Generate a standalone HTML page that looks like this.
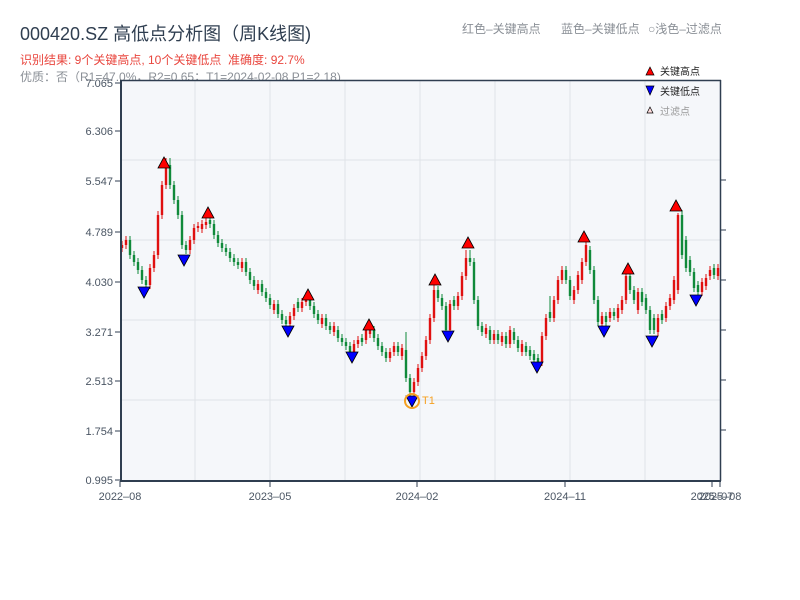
<!DOCTYPE html>
<html><head><meta charset="utf-8"><style>
body{margin:0;width:800px;height:600px;background:#fff;overflow:hidden;font-family:"Liberation Sans","Noto Sans CJK SC",sans-serif;}
</style></head><body>
<svg width="800" height="600" xmlns="http://www.w3.org/2000/svg" style="position:absolute;left:0;top:0;font-family:'Liberation Sans','Noto Sans CJK SC',sans-serif">
<text x="20" y="40" font-size="18" fill="#2f3e50">000420.SZ 高低点分析图（周K线图)</text>
<text x="20" y="64" font-size="12" fill="#e9463e">识别结果: 9个关键高点, 10个关键低点&#160;&#160;准确度: 92.7%</text>
<text x="20" y="81" font-size="12" fill="#8a8f96">优质：否（R1=47.0%，R2=0.65；T1=2024-02-08 P1=2.18)</text>
<text x="462" y="33" font-size="12" fill="#8a8f96">红色–关键高点</text>
<text x="561" y="33" font-size="12" fill="#8a8f96">蓝色–关键低点</text>
<text x="648" y="33" font-size="12" fill="#8a8f96">○浅色–过滤点</text>
<rect x="120" y="80" width="601" height="401" fill="#f5f7fa"/>
<g stroke="#e0e3e8" stroke-width="1">
<line x1="195" y1="80" x2="195" y2="481"/><line x1="270" y1="80" x2="270" y2="481"/><line x1="345" y1="80" x2="345" y2="481"/><line x1="420" y1="80" x2="420" y2="481"/><line x1="495" y1="80" x2="495" y2="481"/><line x1="570" y1="80" x2="570" y2="481"/><line x1="645" y1="80" x2="645" y2="481"/>
<line x1="120" y1="160" x2="721" y2="160"/><line x1="120" y1="240" x2="721" y2="240"/><line x1="120" y1="320" x2="721" y2="320"/><line x1="120" y1="400" x2="721" y2="400"/>
</g>
<path fill="none" stroke="#e01010" stroke-width="1" d="M122 241V252 M126 236V249 M150 264V289 M154 251V272 M158 211V259 M162 181V219 M166 158V189 M190 236V254 M194 224V244 M198 222V232 M202 220V233 M206 218V229 M242 258V272 M258 280V294 M274 300V314 M290 312V328 M294 304V320 M302 298V312 M306 292V306 M322 314V328 M334 322V336 M354 340V356 M358 336V348 M366 326V344 M370 324V338 M390 348V362 M394 342V356 M402 344V360 M414 378V396 M418 364V386 M422 352V372 M426 336V360 M430 314V344 M434 276V322 M450 300V334 M458 292V310 M462 272V300 M466 250V280 M486 324V338 M494 330V344 M502 332V346 M510 326V348 M522 340V356 M542 332V366 M546 314V340 M554 296V322 M558 276V304 M562 266V284 M574 286V304 M578 271V294 M582 258V284 M586 236V266 M602 312V328 M610 308V322 M618 304V322 M622 296V314 M626 272V304 M638 288V314 M658 314V336 M666 302V322 M670 294V310 M674 276V304 M678 213V294 M702 278V296 M706 274V290 M710 266V280 M718 264V280"/>
<path fill="none" stroke="#e01010" stroke-width="2.4" d="M122 248V245 M126 245V240 M150 285V268 M154 268V255 M158 255V215 M162 215V185 M166 185V165 M190 250V240 M194 240V228 M198 228V226 M202 229V224 M206 225V222 M242 268V262 M258 290V284 M274 310V304 M290 324V316 M294 316V308 M302 308V302 M306 302V296 M322 324V318 M334 332V326 M354 352V344 M358 344V340 M366 340V330 M370 334V328 M390 358V352 M394 352V346 M402 356V348 M414 392V382 M418 382V368 M422 368V356 M426 356V340 M430 340V318 M434 318V290 M450 330V304 M458 306V296 M462 296V276 M466 276V258 M486 334V328 M494 340V334 M502 342V336 M510 344V330 M522 352V344 M542 362V336 M546 336V318 M554 318V300 M558 300V280 M562 280V270 M574 300V290 M578 290V275 M582 280V262 M586 262V245 M602 324V316 M610 318V312 M618 318V308 M622 310V300 M626 300V276 M638 310V292 M658 332V318 M666 318V306 M670 306V298 M674 300V280 M678 290V215 M702 292V282 M706 286V278 M710 276V270 M718 276V268"/>
<path fill="none" stroke="#108a3a" stroke-width="1" d="M130 236V259 M134 251V266 M138 258V274 M142 266V284 M146 276V289 M170 158V189 M174 181V204 M178 196V219 M182 211V249 M186 241V254 M210 216V228 M214 220V239 M218 231V247 M222 239V252 M226 244V256 M230 248V262 M234 254V266 M238 258V269 M246 258V276 M250 268V284 M254 276V290 M262 280V296 M266 288V302 M270 294V309 M278 300V318 M282 310V324 M286 316V328 M298 298V312 M310 294V310 M314 302V318 M318 310V324 M326 314V330 M330 322V334 M338 326V342 M342 334V346 M346 338V350 M350 342V356 M362 334V346 M374 326V342 M378 334V350 M382 342V356 M386 348V362 M398 342V356 M406 332V382 M410 374V396 M438 286V302 M442 294V310 M446 302V334 M454 296V310 M470 250V266 M474 258V304 M478 296V330 M482 322V336 M490 326V344 M498 330V344 M506 332V348 M514 328V344 M518 336V352 M526 342V356 M530 346V360 M534 350V364 M538 354V368 M550 296V322 M566 266V284 M570 276V300 M590 246V274 M594 266V304 M598 296V326 M606 312V326 M614 308V320 M630 268V294 M634 286V304 M642 288V306 M646 294V314 M650 306V334 M654 314V334 M662 310V324 M682 210V259 M686 236V272 M690 256V276 M694 268V292 M698 281V296 M714 264V279"/>
<path fill="none" stroke="#108a3a" stroke-width="2.4" d="M130 240V255 M134 255V262 M138 262V270 M142 270V280 M146 280V285 M170 165V185 M174 185V200 M178 200V215 M182 215V245 M186 245V250 M210 220V224 M214 224V235 M218 235V243 M222 243V248 M226 248V252 M230 252V258 M234 258V262 M238 262V265 M246 262V272 M250 272V280 M254 280V286 M262 284V292 M266 292V298 M270 298V305 M278 304V314 M282 314V320 M286 320V324 M298 302V308 M310 298V306 M314 306V314 M318 314V320 M326 318V326 M330 326V330 M338 330V338 M342 338V342 M346 342V346 M350 346V352 M362 338V342 M374 330V338 M378 338V346 M382 346V352 M386 352V358 M398 346V352 M406 350V378 M410 378V392 M438 290V298 M442 298V306 M446 306V330 M454 300V306 M470 258V262 M474 262V300 M478 300V326 M482 326V332 M490 330V340 M498 334V340 M506 336V344 M514 332V340 M518 340V348 M526 346V352 M530 350V356 M534 354V360 M538 358V364 M550 312V318 M566 270V280 M570 280V296 M590 250V270 M594 270V300 M598 300V322 M606 316V322 M614 312V316 M630 276V290 M634 290V300 M642 292V302 M646 298V310 M650 310V330 M654 318V330 M662 314V320 M682 215V255 M686 240V268 M690 260V272 M694 272V288 M698 285V292 M714 268V275"/>
<g stroke="#2f3e50" fill="none">
<line x1="120" y1="80.5" x2="721" y2="80.5" stroke-width="1.5"/>
<line x1="121" y1="80" x2="121" y2="481" stroke-width="2"/>
<line x1="720.5" y1="80" x2="720.5" y2="481" stroke-width="1.5"/>
<line x1="120" y1="481" x2="721" y2="481" stroke-width="2"/>
<g stroke-width="1">
<line x1="115" y1="83" x2="120" y2="83"/><line x1="115" y1="131" x2="120" y2="131"/><line x1="115" y1="181" x2="120" y2="181"/><line x1="115" y1="232" x2="120" y2="232"/><line x1="115" y1="282" x2="120" y2="282"/><line x1="115" y1="332" x2="120" y2="332"/><line x1="115" y1="381" x2="120" y2="381"/><line x1="115" y1="431" x2="120" y2="431"/><line x1="115" y1="480" x2="120" y2="480"/>
<line x1="721" y1="180" x2="726" y2="180"/><line x1="721" y1="230" x2="726" y2="230"/><line x1="721" y1="280" x2="726" y2="280"/><line x1="721" y1="330" x2="726" y2="330"/><line x1="721" y1="380" x2="726" y2="380"/><line x1="721" y1="430" x2="726" y2="430"/>
<line x1="120" y1="481" x2="120" y2="487"/><line x1="270" y1="481" x2="270" y2="487"/><line x1="417" y1="481" x2="417" y2="487"/><line x1="565" y1="481" x2="565" y2="487"/><line x1="712" y1="481" x2="712" y2="487"/><line x1="720" y1="481" x2="720" y2="487"/>
</g></g>
<g font-size="11" fill="#4a5563" text-anchor="end">
<text x="113" y="87">7.065</text><text x="113" y="135">6.306</text><text x="113" y="185">5.547</text><text x="113" y="236">4.789</text><text x="113" y="286">4.030</text><text x="113" y="336">3.271</text><text x="113" y="385">2.513</text><text x="113" y="435">1.754</text><text x="113" y="484">0.995</text>
</g>
<g font-size="11" fill="#4a5563" text-anchor="middle">
<text x="120" y="500">2022–08</text><text x="270" y="500">2023–05</text><text x="417" y="500">2024–02</text><text x="565" y="500">2024–11</text><text x="712" y="500">2025–07</text><text x="720" y="500">2025–08</text>
</g>
<g font-size="10">
<polygon points="650,67 654,75 646,75" fill="#f00" stroke="#000" stroke-width="0.7"/><text x="660" y="75" fill="#222">关键高点</text>
<polygon points="646,86 654,86 650,95" fill="#00f" stroke="#000" stroke-width="0.7"/><text x="660" y="95" fill="#222">关键低点</text>
<polygon points="650,107 653,113 647,113" fill="#fdd" stroke="#000" stroke-width="0.7"/><text x="660" y="115" fill="#999">过滤点</text>
</g>
<g fill="#f00" stroke="#000" stroke-width="0.8">
<polygon points="164,157 170,168 158,168"/><polygon points="208,207 214,218 202,218"/><polygon points="308,289 314,300 302,300"/><polygon points="369,319 375,330 363,330"/><polygon points="435,274 441,285 429,285"/><polygon points="468,237 474,248 462,248"/><polygon points="584,231 590,242 578,242"/><polygon points="628,263 634,274 622,274"/><polygon points="676,200 682,211 670,211"/>
</g>
<g fill="#00f" stroke="#000" stroke-width="0.8">
<polygon points="138,287 150,287 144,298"/><polygon points="178,255 190,255 184,266"/><polygon points="282,326 294,326 288,337"/><polygon points="346,352 358,352 352,363"/><polygon points="406,396 418,396 412,407"/><polygon points="442,331 454,331 448,342"/><polygon points="531,362 543,362 537,373"/><polygon points="598,326 610,326 604,337"/><polygon points="646,336 658,336 652,347"/><polygon points="690,295 702,295 696,306"/>
</g>
<circle cx="412" cy="401" r="7" fill="none" stroke="#f5a020" stroke-width="2"/>
<text x="422" y="404" font-size="11" fill="#f5a020">T1</text>
</svg>
</body></html>
